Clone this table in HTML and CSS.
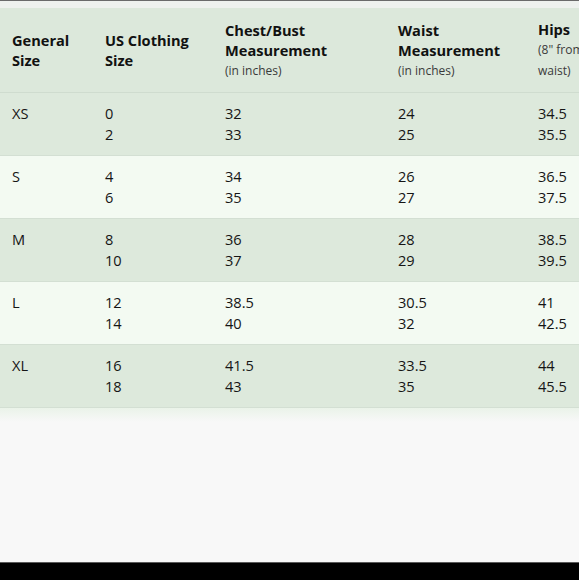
FILE: index.html
```html
<!DOCTYPE html>
<html lang="en">
<head>
<meta charset="utf-8">
<title>Size Chart</title>
<link rel="stylesheet" href="styles.css">
</head>
<body>
<div class="page">
  <div class="top-strip"></div>
  <table class="chart">
    <colgroup>
      <col class="c1"><col class="c2"><col class="c3"><col class="c4"><col class="c5">
    </colgroup>
    <thead>
      <tr class="head">
        <th>General<br>Size</th>
        <th>US Clothing<br>Size</th>
        <th>Chest/Bust<br>Measurement<span class="unit">(in inches)</span></th>
        <th>Waist<br>Measurement<span class="unit">(in inches)</span></th>
        <th>Hips<span class="unit">(8" from</span><span class="unit">waist)</span></th>
      </tr>
    </thead>
    <tbody>
      <tr class="green"><td>XS</td><td>0<br>2</td><td>32<br>33</td><td>24<br>25</td><td>34.5<br>35.5</td></tr>
      <tr class="light"><td>S</td><td>4<br>6</td><td>34<br>35</td><td>26<br>27</td><td>36.5<br>37.5</td></tr>
      <tr class="green"><td>M</td><td>8<br>10</td><td>36<br>37</td><td>28<br>29</td><td>38.5<br>39.5</td></tr>
      <tr class="light"><td>L</td><td>12<br>14</td><td>38.5<br>40</td><td>30.5<br>32</td><td>41<br>42.5</td></tr>
      <tr class="green"><td>XL</td><td>16<br>18</td><td>41.5<br>43</td><td>33.5<br>35</td><td>44<br>45.5</td></tr>
    </tbody>
  </table>
  <div class="filler"></div>
  <div class="bottom-bar"></div>
</div>
</body>
</html>
```
FILE: styles.css
```css
html, body {
  margin: 0;
  padding: 0;
  background: #f8f8f8;
  overflow: hidden;
}
.page {
  width: 579px;
  height: 580px;
  display: flex;
  flex-direction: column;
  overflow: hidden;
  font-family: "Open Sans", "Noto Sans", sans-serif;
  color: #111;
}
.top-strip {
  height: 8px;
  flex: none;
  background: #eef1ee;
  border-top: 1px solid #6a6a6a;
  box-sizing: border-box;
}
.chart {
  border-collapse: collapse;
  table-layout: fixed;
  width: 640px;
  flex: none;
}
.c1 { width: 93px; }
.c2 { width: 120px; }
.c3 { width: 173px; }
.c4 { width: 140px; }
.c5 { width: 114px; }
.head {
  background: #dce8db;
}
th {
  text-align: left;
  vertical-align: middle;
  font-weight: 700;
  font-size: 14.6px;
  line-height: 20px;
  padding: 11px 12px 11px;
  height: 61px;
  color: #111;
  white-space: nowrap;
  border-bottom: 1px solid #cfdccf;
}
.unit {
  display: block;
  font-weight: 400;
  font-size: 12px;
  color: #3a3a3a;
  line-height: 21px;
}
td {
  vertical-align: top;
  font-size: 14.6px;
  line-height: 21px;
  padding: 10px 12px 10px;
  height: 42px;
  color: #151515;
  border-bottom: 1px solid #d3dfd3;
}
.green { background: #dde9dc; }
.light { background: #f3faf2; }
.filler {
  flex: 1;
  background: linear-gradient(#eaf3e9 0, #f8f8f8 14px);
}
.bottom-bar {
  height: 17px;
  flex: none;
  background: #000;
  border-top: 1px solid #5a5a5a;
}
```
